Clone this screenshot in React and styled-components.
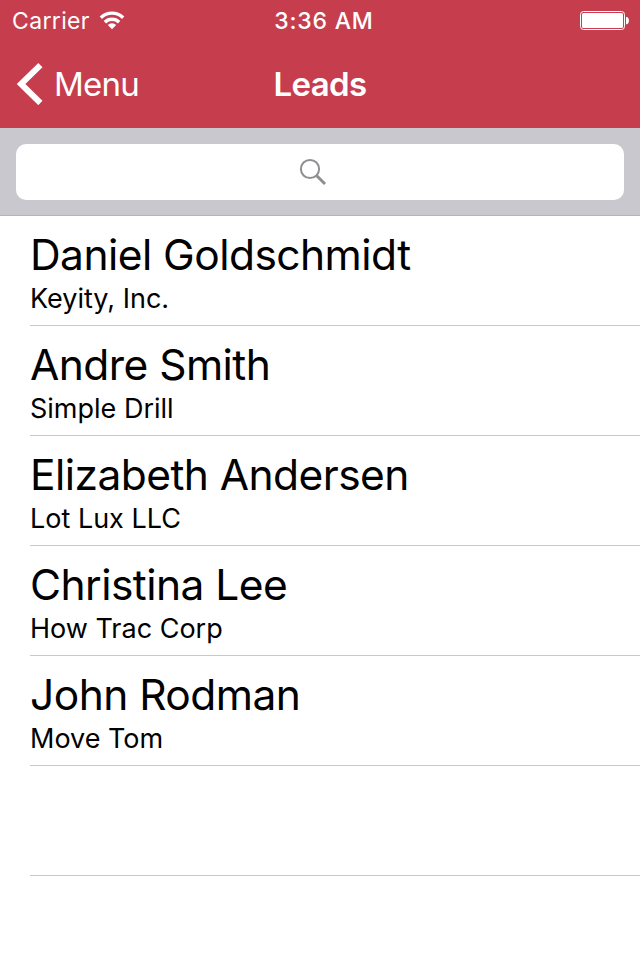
import React from 'react';
import styled, { createGlobalStyle } from 'styled-components';

const leads = [
  { name: 'Daniel Goldschmidt', company: 'Keyity, Inc.' },
  { name: 'Andre Smith', company: 'Simple Drill' },
  { name: 'Elizabeth Andersen', company: 'Lot Lux LLC' },
  { name: 'Christina Lee', company: 'How Trac Corp' },
  { name: 'John Rodman', company: 'Move Tom' }
];

export default function App() {
  return (
    <>
      <GlobalStyle />
      <Screen>
        <Header>
          <StatusBar>
            <Carrier>
              <span>Carrier</span>
              <WifiIcon />
            </Carrier>
            <Clock>3:36 AM</Clock>
            <BatteryIcon />
          </StatusBar>
          <NavBar>
            <BackButton>
              <BackIcon />
              <span>Menu</span>
            </BackButton>
            <Title>Leads</Title>
          </NavBar>
        </Header>
        <SearchBar>
          <SearchField>
            <SearchIcon />
          </SearchField>
        </SearchBar>
        <List>
          {leads.map(lead => (
            <Row key={lead.name}>
              <Name>{lead.name}</Name>
              <Company>{lead.company}</Company>
            </Row>
          ))}
          <Row />
        </List>
      </Screen>
    </>
  );
}

const WifiIcon = () => (
  <svg width='26' height='20' viewBox='0 0 26 20' fill='none' stroke='#fff' strokeWidth='3.4'>
    <path d='M1.900 6.700a15.700 15.700 0 0 1 22.200 0M5.900 11.200a10 10 0 0 1 14.200 0' />
    <path d='M13 18.300l-4.200-4.200a5.900 5.900 0 0 1 8.400 0z' fill='#fff' stroke='none' />
  </svg>
);

const BatteryIcon = () => (
  <svg width='49' height='20' viewBox='0 0 49 20'>
    <rect x='0.5' y='1.5' width='44' height='18' rx='3' fill='none' stroke='#fff' />
    <rect x='2' y='3' width='41' height='15' rx='1.5' fill='#fff' />
    <path d='M46 7h1.200q1.800 1.200 1.800 3.600t-1.800 3.600H46z' fill='#fff' />
  </svg>
);

const BackIcon = () => (
  <svg width='26' height='42' viewBox='0 0 26 42' fill='none' stroke='#fff' strokeWidth='6'>
    <path d='M23.400 2.200L4 21l19.400 19' />
  </svg>
);

const SearchIcon = () => (
  <svg width='28' height='28' viewBox='0 0 28 28' fill='none' stroke='#8e8e93'>
    <circle cx='11' cy='11' r='9.100' strokeWidth='2' />
    <path d='M17.500 17.500L26 26' strokeWidth='3' />
  </svg>
);

const GlobalStyle = createGlobalStyle`
  * {
    box-sizing: border-box;
  }

  body {
    margin: 0;
    background: #fff;
    font-family: Inter, 'Liberation Sans', sans-serif;
    color: #000;
  }
`;

const Screen = styled.main`
  width: 640px;
  height: 960px;
  overflow: hidden;
  background: #fff;
`;

const Header = styled.header`
  height: 128px;
  background: #c63d4d;
  color: #fff;
`;

const StatusBar = styled.div`
  display: grid;
  grid-template-columns: 1fr auto 1fr;
  align-items: center;
  height: 40px;
  padding: 0 11px 0 12px;

  > svg {
    justify-self: end;
  }
`;

const Carrier = styled.div`
  display: flex;
  align-items: center;
  gap: 9px;
  padding-top: 1px;
  font-size: 23px;
  letter-spacing: 0.35px;
`;

const Clock = styled.div`
  padding: 1px 0 0 7px;
  font-size: 23px;
  font-weight: 500;
  letter-spacing: 0.8px;
`;

const NavBar = styled.nav`
  display: grid;
  grid-template-columns: 1fr auto 1fr;
  align-items: center;
  height: 88px;
  padding: 0 17px;
`;

const BackButton = styled.div`
  display: flex;
  align-items: center;
  gap: 11px;
  font-size: 33px;
  letter-spacing: -0.8px;
`;

const Title = styled.h1`
  margin: 0;
  font-size: 33px;
  font-weight: 600;
  letter-spacing: -0.6px;
`;

const SearchBar = styled.div`
  height: 88px;
  padding: 16px;
  background: #c9c8ce;
  border-bottom: 1px solid #b5b4ba;
`;

const SearchField = styled.div`
  display: flex;
  align-items: center;
  justify-content: center;
  height: 56px;
  padding-right: 14px;
  border-radius: 10px;
  background: #fff;
`;

const List = styled.ul`
  margin: 0;
  padding: 0 0 0 30px;
  list-style: none;
`;

const Row = styled.li`
  height: 110px;
  padding-top: 12px;
  border-bottom: 1px solid #c8c7cc;
`;

const Name = styled.div`
  font-size: 42.5px;
  line-height: 54px;
  letter-spacing: -0.55px;
  white-space: nowrap;
`;

const Company = styled.div`
  font-size: 27px;
  line-height: 34px;
`;
